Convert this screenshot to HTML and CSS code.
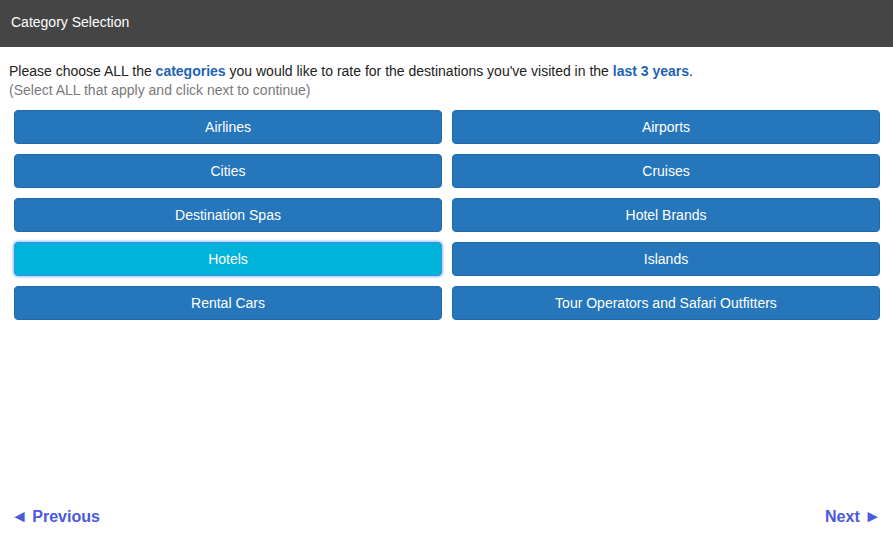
FILE: index.html
```html
<!DOCTYPE html>
<html lang="en">
<head>
    <meta charset="UTF-8">
    <title>Category Selection</title>
    <link rel="stylesheet" href="styles.css">
</head>
<body>

    <div class="header">Category Selection</div>

    <div class="content">
        <p class="intro">Please choose ALL the <b class="hl">categories</b> you would like to rate for the destinations you've visited in the <b class="hl">last 3 years</b>.</p>
        <p class="hint">(Select ALL that apply and click next to continue)</p>

        <div class="choices">
            <button type="button" class="choice">Airlines</button>
            <button type="button" class="choice">Airports</button>
            <button type="button" class="choice">Cities</button>
            <button type="button" class="choice">Cruises</button>
            <button type="button" class="choice">Destination Spas</button>
            <button type="button" class="choice">Hotel Brands</button>
            <button type="button" class="choice selected">Hotels</button>
            <button type="button" class="choice">Islands</button>
            <button type="button" class="choice">Rental Cars</button>
            <button type="button" class="choice">Tour Operators and Safari Outfitters</button>
        </div>
    </div>

    <div class="nav">
        <a href="#" class="nav-link"><span class="arrow">&#9668;</span> Previous</a>
        <a href="#" class="nav-link">Next <span class="arrow">&#9658;</span></a>
    </div>

</body>
</html>
```

FILE: styles.css
```css
body {
    font-family: "Liberation Sans", Arial, sans-serif;
    margin: 0;
    height: 539px;
    display: flex;
    flex-direction: column;
    color: #222;
}

.header {
    background-color: #454545;
    color: #fff;
    font-size: 14px;
    height: 47px;
    line-height: 45px;
    padding-left: 11px;
}

.content {
    padding: 15px 13px 0 14px;
    flex: 1;
}

.intro,
.hint {
    font-size: 14px;
    line-height: 19px;
    margin: 0 0 0 -5px;
}

.hint {
    color: #7a7a7a;
}

.hl {
    color: #1d63b3;
}

.choices {
    display: grid;
    grid-template-columns: 1fr 1fr;
    gap: 10px;
    margin-top: 10px;
}

.choice {
    font-family: "Liberation Sans", Arial, sans-serif;
    font-size: 14px;
    color: #fff;
    background-color: #2576bb;
    border: 1px solid #1f69aa;
    border-radius: 4px;
    height: 34px;
    padding: 0;
    cursor: pointer;
}

.choice.selected {
    background-color: #00b3da;
    border-color: #3d8ee6;
    box-shadow: 0 0 3px 1px #8ec2ff;
}

.nav {
    display: flex;
    justify-content: space-between;
    padding: 0 12px 12px 11px;
}

.nav-link {
    color: #4b59df;
    font-size: 16px;
    font-weight: bold;
    text-decoration: none;
}

.arrow {
    font-size: 17px;
}
```
